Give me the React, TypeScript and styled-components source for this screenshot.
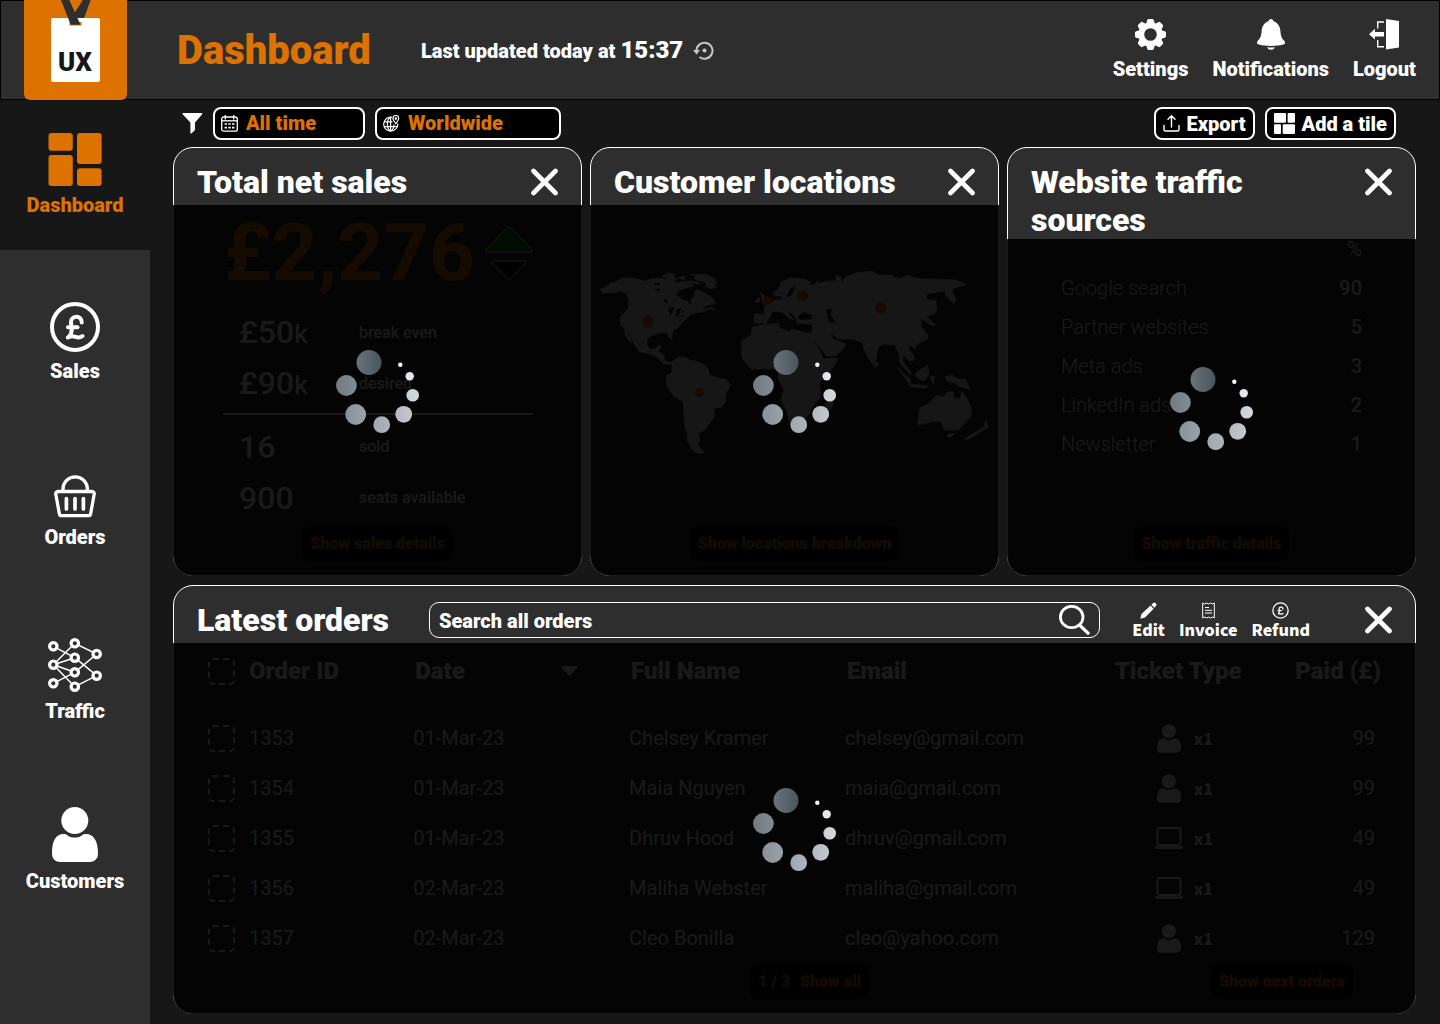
import React from "react";
import styled, { createGlobalStyle } from "styled-components";

const color = {
  page: "#171717",
  panel: "#2e2e2e",
  accent: "#de7200",
  white: "#ffffff",
  black: "#000000",
};

const heavy = 900;

const GlobalStyle = createGlobalStyle`
  *, *::before, *::after { box-sizing: border-box; }
  body {
    margin: 0;
    background: ${color.page};
    color: ${color.white};
    font-family: Roboto, "Liberation Sans", sans-serif;
  }
  button, input, select { font: inherit; color: inherit; }
  h1, h2, p, ul, dl, dd { margin: 0; padding: 0; }
  svg { display: block; flex: none; }
`;

/* ---------- layout ---------- */

const Page = styled.div`
  min-height: 100vh;
  display: flex;
  flex-direction: column;
`;

const Header = styled.header`
  display: flex;
  align-items: center;
  height: 100px;
  padding: 0 24px;
  background: ${color.panel};
  box-shadow: inset 0 0 0 1px ${color.black};
`;

const LogoLink = styled.a`
  display: block;
  width: 103px;
  height: 100px;
  margin-right: 50px;
  background: ${color.accent};
  border-radius: 0 0 6px 6px;
`;

const PageTitle = styled.h1`
  width: 244px;
  padding-top: 2px;
  font-size: 40px;
  line-height: 48px;
  font-weight: ${heavy};
  color: ${color.accent};
`;

const Updated = styled.p`
  display: flex;
  align-items: center;
  gap: 10px;
  font-size: 20px;
  line-height: 28px;
  font-weight: ${heavy};

  time {
    font-size: 24px;
  }
`;

const PlainButton = styled.button`
  display: flex;
  align-items: center;
  justify-content: center;
  padding: 0;
  border: 0;
  background: none;
  cursor: pointer;
`;

const HeaderActions = styled.div`
  display: flex;
  gap: 24px;
  margin-left: auto;
`;

const HeaderAction = styled(PlainButton)`
  flex-direction: column;
  gap: 7px;
  font-size: 20px;
  line-height: 24px;
  font-weight: ${heavy};
`;

const Columns = styled.div`
  flex: 1;
  display: flex;
`;

const Sidebar = styled.nav`
  flex: none;
  width: 150px;
  background: ${color.panel};

  ul {
    list-style: none;
  }
`;

const NavItem = styled.li<{ $active?: boolean }>`
  height: ${(p) => (p.$active ? 150 : 169)}px;
  margin-bottom: ${(p) => (p.$active ? 8 : 0)}px;
  background: ${(p) => (p.$active ? color.page : "transparent")};
  color: ${(p) => (p.$active ? color.accent : color.white)};
`;

const NavLink = styled.a`
  display: flex;
  flex-direction: column;
  align-items: center;
  justify-content: center;
  gap: 7px;
  height: 100%;
  color: inherit;
  font-size: 20px;
  line-height: 24px;
  font-weight: ${heavy};
  text-decoration: none;
`;

const Main = styled.main`
  flex: 1;
  min-width: 0;
  display: flex;
  flex-direction: column;
  padding: 7px 24px 10px 23px;
`;

const Toolbar = styled.div`
  display: flex;
  align-items: center;
  gap: 10px;
  padding: 0 20px 0 9px;
  margin-bottom: 7px;
`;

const Spacer = styled.div`
  flex: 1;
`;

const Filter = styled.label<{ $width: number }>`
  display: flex;
  align-items: center;
  gap: 8px;
  width: ${(p) => p.$width}px;
  height: 33px;
  padding: 0 6px;
  border: 2px solid ${color.white};
  border-radius: 8px;
  background: ${color.black};

  select {
    flex: 1;
    min-width: 0;
    padding: 0 0 2px;
    border: 0;
    appearance: none;
    background: none;
    color: ${color.accent};
    font-size: 20px;
    line-height: 24px;
    font-weight: ${heavy};
  }
`;

const ToolButton = styled(PlainButton)`
  gap: 7px;
  height: 33px;
  padding: 0 7px;
  border: 2px solid ${color.white};
  border-radius: 8px;
  background: ${color.black};
  font-size: 20px;
  line-height: 24px;
  font-weight: ${heavy};
`;

const Board = styled.div`
  flex: 1;
  display: grid;
  grid-template-rows: 1fr 1fr;
  gap: 9px;
`;

const Tiles = styled.div`
  display: grid;
  grid-template-columns: repeat(3, 1fr);
  gap: 8px;
`;

const Card = styled.section`
  display: flex;
  flex-direction: column;
  min-width: 0;
  border: 1px solid ${color.white};
  border-radius: 20px;
  background: ${color.panel};
`;

const CardHeader = styled.div`
  display: flex;
  align-items: flex-start;
  min-height: 57px;
  padding: 15px 23px 0 23px;
`;

const CardTitle = styled.h2`
  max-width: 290px;
  font-size: 32px;
  line-height: 38px;
  font-weight: ${heavy};
`;

const CloseButton = styled(PlainButton)`
  height: 38px;
  margin-left: auto;
`;

const CardBody = styled.div`
  position: relative;
  flex: 1;
  display: flex;
  flex-direction: column;
  padding-bottom: 14px;
`;

/* Dims a card's content while its data loads. */
const Veil = styled.div`
  position: absolute;
  inset: 0 -1px -1px;
  display: grid;
  place-items: center;
  border-radius: 0 0 20px 20px;
  background: rgba(0, 0, 0, 0.9);
`;

const DetailButton = styled(PlainButton)`
  align-self: center;
  gap: 10px;
  height: 35px;
  margin-top: auto;
  padding: 0 8px;
  border-radius: 8px;
  background: ${color.black};
  color: ${color.accent};
  font-size: 16px;
  line-height: 20px;
  font-weight: ${heavy};
`;

/* ---------- sales ---------- */

const Total = styled.div`
  display: flex;
  align-items: center;
  gap: 10px;
  padding: 0 48px 0 50px;
  height: 96px;
  color: ${color.accent};
  font-size: 80px;
  line-height: 96px;
  font-weight: 700;
`;

const Stats = styled.dl<{ $ruled?: boolean }>`
  display: grid;
  grid-template-columns: 120px 1fr;
  grid-auto-rows: 51px;
  align-items: center;
  margin: 0 48px 0 49px;
  padding: ${(p) => (p.$ruled ? "6px 16px 4px" : "6px 16px 0")};
  border-bottom: ${(p) => (p.$ruled ? `2px solid ${color.white}` : "0")};
`;

const StatValue = styled.dd`
  font-size: 32px;
  line-height: 38px;
  font-weight: 500;

  small {
    font-size: 26px;
  }
`;

const StatName = styled.dt`
  font-size: 16px;
  line-height: 20px;
  font-weight: 500;
`;

/* ---------- locations ---------- */

const MapFrame = styled.div`
  padding: 65px 8px 0 9px;

  svg {
    width: 100%;
    height: auto;
  }
`;

/* ---------- traffic ---------- */

const TrafficTable = styled.table`
  margin: 0 53px;
  border-collapse: collapse;
  font-size: 20px;
  line-height: 24px;

  th, td {
    height: 39px;
    padding: 0;
    text-align: left;
    font-weight: 300;
  }
  td {
    text-align: right;
    font-weight: 500;
  }
  thead th {
    height: 29px;
    line-height: 20px;
    text-align: right;
    vertical-align: top;
    font-weight: 400;
  }
`;

/* ---------- orders ---------- */

const SearchBox = styled.label`
  flex: 1;
  display: flex;
  align-items: center;
  gap: 8px;
  height: 36px;
  margin: 1px 32px 0 40px;
  padding: 0 9px;
  border: 1px solid ${color.white};
  border-radius: 10px;

  input {
    flex: 1;
    min-width: 0;
    padding: 2px 0 0;
    border: 0;
    outline: 0;
    background: none;
    font-size: 20px;
    line-height: 24px;
    font-weight: ${heavy};
  }
  input::placeholder {
    color: ${color.white};
    opacity: 1;
  }
`;

const RowActions = styled.div`
  display: flex;
  gap: 14px;
  margin: 1px 54px 0 0;
`;

const RowAction = styled(PlainButton)`
  flex-direction: column;
  font-family: "Noto Sans CJK JP", "Noto Sans", sans-serif;
  font-size: 16px;
  line-height: 20px;
  font-weight: 900;
`;

const OrdersTable = styled.table`
  margin: 0 34px;
  table-layout: fixed;
  border-collapse: collapse;
  font-size: 20px;
  line-height: 24px;

  th, td {
    padding: 0;
    text-align: left;
    white-space: nowrap;
  }
  th {
    height: 70px;
    padding-bottom: 14px;
    font-size: 24px;
    line-height: 28px;
    font-weight: ${heavy};
  }
  th:nth-child(3), th:nth-child(4), th:nth-child(5) {
    padding-left: 2px;
  }
  td {
    height: 50px;
  }
  th:last-child, td:last-child {
    text-align: right;
  }
  td:last-child {
    padding-right: 6px;
  }
`;

const Col = styled.col<{ $share: number }>`
  width: ${(p) => p.$share}%;
`;

const Tick = styled.input`
  display: block;
  appearance: none;
  width: 27px;
  height: 27px;
  margin: 0;
  border: 2px dashed ${color.white};
  border-radius: 5px;
`;

const SortButton = styled(PlainButton)`
  width: 163px;
  justify-content: space-between;
`;

const Ticket = styled.span`
  display: grid;
  grid-template-columns: 28px auto;
  align-items: center;
  justify-content: start;
  gap: 11px;
  padding-left: 40px;
  font-family: "Noto Sans CJK JP", "Noto Sans", sans-serif;
  font-weight: 900;
  font-size: 16px;

  svg {
    justify-self: center;
  }
`;

const OrdersFooter = styled.div`
  display: flex;
  justify-content: flex-end;
  gap: 342px;
  margin-top: auto;
  padding-right: 62px;
`;

/* ---------- icons ---------- */

const LogoArt = () => (
  <svg width="103" height="100" viewBox="0 0 103 100">
    <rect x="27" y="18" width="49" height="64" rx="2" fill="#fff" />
    <path d="M58.700 0H66.700L60 18H53.500L50.500 13Z" fill="#2e2e2e" />
    <path d="M45.500 22H57.500V25.500H45.500Z" fill={color.accent} />
    <path d="M37 0H45.300L56.500 24.700H46.700Z" fill="#2e2e2e" />
    <text
      x="51"
      y="71"
      textAnchor="middle"
      fontFamily="Roboto, sans-serif"
      fontWeight="900"
      fontSize="26"
      fill="#171717"
    >
      UX
    </text>
  </svg>
);

const RefreshIcon = () => (
  <svg width="21" height="19" viewBox="0 0 21 19" fill="none">
    <path d="M3.500 9.500A8 8 0 1 1 6.500 16" stroke="#c8c8c8" strokeWidth="2" />
    <path d="M0 9H7L3.500 13.500Z" fill="#c8c8c8" />
    <circle cx="11.500" cy="9.500" r="2" fill="#c8c8c8" />
  </svg>
);

const GearIcon = () => (
  <svg width="31" height="31" viewBox="-15.500 -15.500 31 31">
    <circle r="9.200" fill="none" stroke="#fff" strokeWidth="5.800" />
    {[0, 45, 90, 135, 180, 225, 270, 315].map((a) => (
      <path
        key={a}
        d="M-4.600 -10L-3.300 -14.200Q-3 -15.500 -1.800 -15.500H1.800Q3 -15.500 3.300 -14.200L4.600 -10Z"
        transform={`rotate(${a})`}
        fill="#fff"
      />
    ))}
  </svg>
);

const BellIcon = () => (
  <svg width="28" height="31" viewBox="0 0 28 31" fill="#fff">
    <path d="M14 0c1.200 0 2 .8 2.400 2C20.500 3.400 23 7 23.400 12c.4 5.500 1.600 7.600 3.600 9.600 1.600 1.700 1.200 3.400-.8 4C22.500 26.700 18.500 27 14 27S5.500 26.700 1.800 25.600C-.2 25-.6 23.300 1 21.600 3 19.600 4.200 17.500 4.600 12 5 7 7.500 3.400 11.600 2 12 .8 12.800 0 14 0Z" />
    <path d="M9.800 28.200q4.200.4 8.400 0Q16.500 30.800 14 30.800T9.800 28.200Z" />
  </svg>
);

const LogoutIcon = () => (
  <svg width="31" height="31" viewBox="0 0 31 31" fill="#fff">
    <path d="M17 0L30 2V28.500L17 30.500Z" />
    <path d="M0 15.200L6 9.800V13H15V17.600H6V20.600Z" />
    <path d="M15 3H8.700V9.500M8.700 21V27.700H15" fill="none" stroke="#fff" strokeWidth="1.400" />
  </svg>
);

const TilesIcon = () => (
  <svg width="54" height="53" viewBox="0 0 54 53" fill="currentColor">
    <rect x="0.500" width="24.300" height="17.700" rx="3" />
    <rect x="0.500" y="22" width="24.300" height="31" rx="3" />
    <rect x="29" width="24.600" height="31" rx="3" />
    <rect x="29" y="35.300" width="24.600" height="17.700" rx="3" />
  </svg>
);

const PoundShape = () => (
  <>
    <path d="M31.800 20.500C32 16.500 29 14.800 26.500 14.800 22.500 14.800 20.500 17.800 21 21.300 21.500 24.500 22.500 28 21 31.500 20.300 33.500 19 34.800 17.800 35.500 21 33.800 23.500 34 25.500 34.800 28.500 36 30.500 35.600 32.500 34" />
    <path d="M18 25.300H27.500" />
  </>
);

const SalesIcon = () => (
  <svg width="50" height="50" viewBox="0 0 50 50" fill="none" stroke="#fff" strokeWidth="4" strokeLinecap="round" strokeLinejoin="round">
    <circle cx="25" cy="25" r="23" />
    <PoundShape />
  </svg>
);

const BasketIcon = () => (
  <svg width="42" height="43" viewBox="0 0 42 43" fill="none" stroke="#fff" strokeWidth="3.300">
    <path d="M9 15.500V14a12.200 12.200 0 0 1 24.400 0V15.500" />
    <path d="M4 16.500H38A2.300 2.300 0 0 1 40.200 19.300L36.600 38.900A2 2 0 0 1 34.600 40.600H7.400A2 2 0 0 1 5.400 38.900L1.800 19.300A2.300 2.300 0 0 1 4 16.500Z" />
    <path d="M12.400 23.500V34M21 23.500V34M29.400 23.500V34" strokeWidth="3.700" strokeLinecap="round" />
  </svg>
);

const trafficNodes = [
  [5.3, 8.3],
  [5.3, 26.7],
  [5.3, 45.3],
  [26.8, 5.3],
  [26.8, 19.7],
  [26.8, 34.3],
  [26.8, 48.7],
  [48.7, 16],
  [48.7, 37.7],
];
const trafficEdges = [
  [0, 4],
  [1, 3],
  [1, 4],
  [1, 5],
  [1, 6],
  [2, 5],
  [3, 7],
  [4, 8],
  [5, 7],
  [6, 8],
];

const TrafficIcon = () => (
  <svg width="54" height="54" viewBox="0 0 54 54">
    {trafficEdges.map(([a, b]) => (
      <line
        key={`${a}-${b}`}
        x1={trafficNodes[a][0]}
        y1={trafficNodes[a][1]}
        x2={trafficNodes[b][0]}
        y2={trafficNodes[b][1]}
        stroke="#fff"
        strokeWidth="1.500"
      />
    ))}
    {trafficNodes.map(([x, y]) => (
      <circle key={`${x}-${y}`} cx={x} cy={y} r="3.700" fill={color.panel} stroke="#fff" strokeWidth="3.200" />
    ))}
  </svg>
);

const PersonIcon = ({ size = 55 }: { size?: number }) => (
  <svg width={Math.round((size * 46) / 55)} height={size} viewBox="0 0 46 55" fill="#fff">
    <circle cx="22.800" cy="13.500" r="13.500" />
    <path d="M11.500 27C13.300 27 14.300 27.500 15.700 28.400 19.900 31.300 25.500 31.300 29.700 28.400 31.100 27.500 32.100 27 33.900 27 41.500 27 46 33.500 46 46.500 46 52 42.500 55 37.500 55H8.500C3.500 55 0 52 0 46.500 0 33.500 4 27 11.500 27Z" />
  </svg>
);

const LaptopIcon = () => (
  <svg width="28" height="22" viewBox="0 0 28 22">
    <rect x="2.500" y="1" width="23" height="17" rx="1.500" fill="none" stroke="#fff" strokeWidth="1.800" />
    <path d="M0 19.200H28V20.500Q27.500 22 26 22H2Q.5 22 0 20.500Z" fill="#fff" />
  </svg>
);

const FunnelIcon = () => (
  <svg width="21" height="21" viewBox="0 0 21 21" fill="#fff">
    <path d="M1 0H19.800Q20.700.6 20 1.500L13 9.500V17L9.400 20.500Q8.400 20.800 8.400 20V9.500L.8 1.500Q.1.600 1 0Z" />
  </svg>
);

const CalendarIcon = () => (
  <svg width="17" height="17" viewBox="0 0 17 17" fill="none" stroke="#fff" strokeWidth="1.300">
    <rect x=".7" y="2" width="15.600" height="14.200" rx="2" />
    <path d="M.7 5.800H16.300" />
    <path d="M4.300 0V4M12.700 0V4" strokeLinecap="round" />
    <path d="M3.600 9H6M7.300 9H9.700M11 9H13.400M3.600 12.600H6M7.300 12.600H9.700M11 12.600H13.400" strokeWidth="1.600" />
  </svg>
);

const GlobeIcon = () => (
  <svg width="17" height="17" viewBox="0 0 17 17" fill="none" stroke="#fff" strokeWidth="1.200">
    <path d="M9 2.200A7 7 0 1 0 14.700 8.500" />
    <path d="M7.600 2.200C3.300 4.500 3.300 13.500 7.600 16M7.600 2.200V16M7.600 16C10 14.800 11 12.500 11 9.500M1.200 6.800H9.500M1.200 11.600H14" />
    <path d="M12.800 8.600C10.800 5.800 9.900 4.700 9.900 3.400a2.900 2.900 0 0 1 5.800 0C15.700 4.700 14.800 5.800 12.800 8.600Z" />
    <circle cx="12.800" cy="3.500" r=".7" />
  </svg>
);

const ExportIcon = () => (
  <svg width="17" height="17" viewBox="0 0 17 17" fill="none" stroke="#fff" strokeWidth="1.400" strokeLinecap="round" strokeLinejoin="round">
    <path d="M8.500 12V1M5 4.200L8.500.8 12 4.200M1 10.500V14.500Q1 16 2.500 16H14.500Q16 16 16 14.500V10.500" />
  </svg>
);

const AddTileIcon = () => (
  <svg width="21" height="21" viewBox="0 0 21 21" fill="#fff">
    <rect width="12" height="9.700" rx="1" />
    <rect x="13.600" width="7.400" height="9.700" rx="1" />
    <rect y="11.300" width="7" height="9.700" rx="1" />
    <rect x="8.700" y="11.300" width="12.300" height="9.700" rx="1" />
  </svg>
);

const CloseIcon = () => (
  <svg width="28" height="28" viewBox="0 0 28 28" stroke="#fff" strokeWidth="4.600" strokeLinecap="round">
    <path d="M3.500 3L25.500 25M25.500 3L3.500 25" />
  </svg>
);

const SearchIcon = () => (
  <svg width="31" height="30" viewBox="0 0 31 30" fill="none" stroke="#fff" strokeLinecap="round">
    <ellipse cx="12.700" cy="12" rx="11.300" ry="10.700" strokeWidth="2.800" />
    <path d="M21 20.500L29 28.200" strokeWidth="3.200" />
  </svg>
);

const PencilIcon = () => (
  <svg width="17" height="17" viewBox="0 0 17 17" fill="#fff">
    <path d="M.3 16.700L1.500 12 10.500 3.600 13.600 6.700 5 15.600Z" />
    <path d="M11.400 2.700L13.200.9Q14.200 0 15.200.9L16.100 1.800Q17 2.800 16.100 3.800L14.400 5.700Z" />
  </svg>
);

const ReceiptIcon = () => (
  <svg width="13" height="17" viewBox="0 0 13 17" fill="none" stroke="#fff" strokeWidth="1">
    <path d="M.7 1L2.500 2 4.500 1 6.500 2 8.500 1 10.500 2 12.300 1V16L10.500 15 8.500 16 6.500 15 4.500 16 2.500 15 .7 16Z" />
    <path d="M3 5.500H7M3 8.300H10M3 11H10" />
  </svg>
);

const RefundIcon = () => (
  <svg width="17" height="17" viewBox="0 0 50 50" fill="none" stroke="#fff" strokeWidth="3.800" strokeLinecap="round">
    <circle cx="25" cy="25" r="22.500" />
    <PoundShape />
  </svg>
);

const TrendIcon = () => (
  <svg width="48" height="54" viewBox="0 0 48 54" stroke="#fff" strokeLinejoin="round">
    <path d="M22.500 1.500Q24 .2 25.500 1.500L47 23.500Q48 26 45.500 26H2.500Q0 26 1 23.500Z" fill="#007a00" />
    <path d="M7.500 35H40.500Q42 35.500 41 37L25.500 52.500Q24 54 22.500 52.500L7 37Q6 35.500 7.500 35Z" fill="#000" />
  </svg>
);

const SortIcon = () => (
  <svg width="17" height="10" viewBox="0 0 17 10" fill="#fff">
    <path d="M1 0H16Q17.200.4 16.400 1.500L9.300 9.200Q8.500 10 7.700 9.200L.6 1.500Q-.2.400 1 0Z" />
  </svg>
);

const spinnerDots = [
  { x: 33, y: 12.5, r: 12.5, from: "#6a7378", to: "#48555d" },
  { x: 10.4, y: 35.5, r: 10.4, from: "#727b82", to: "#828a92" },
  { x: 19.7, y: 64.5, r: 10.4, from: "#8a9299", to: "#9aa2a9" },
  { x: 45.7, y: 74.7, r: 8.4, from: "#a0a7ae", to: "#aeb5bc" },
  { x: 67.7, y: 64.3, r: 8.4, from: "#b4bac1", to: "#c4c9cf" },
  { x: 76.7, y: 45.2, r: 6.3, from: "#cbd0d4", to: "#d5d9dd" },
  { x: 73.7, y: 26.2, r: 4.2, from: "#dfe3e8", to: "#e6e9ed" },
  { x: 64.3, y: 14.8, r: 2.2, from: "#f4f5f7", to: "#ffffff" },
];

const Spinner = ({ id }: { id: string }) => (
  <svg width="84" height="86" viewBox="0 -2 84 86" role="img" aria-label="Loading">
    <defs>
      {spinnerDots.map((d, i) => (
        <linearGradient key={i} id={`${id}-${i}`}>
          <stop offset="0" stopColor={d.from} />
          <stop offset="1" stopColor={d.to} />
        </linearGradient>
      ))}
    </defs>
    {spinnerDots.map((d, i) => (
      <circle key={i} cx={d.x} cy={d.y} r={d.r} fill={`url(#${id}-${i})`} />
    ))}
  </svg>
);

const land = [
  "M32 148L50 140 60 130 78 126 95 114H130L165 124 185 116 215 114 228 120 250 122 262 128 285 124 300 130 312 138 300 140 270 150 258 160 265 172 280 180 292 182 298 196 304 190 302 178 314 170 312 156 320 148 335 155 348 162 360 170 372 178 376 190 355 196 340 202 325 215 300 225 290 236 280 244 270 256 262 265 248 274 245 298 236 292 234 280 220 276 205 280 185 286 172 298 170 315 180 328 195 326 208 314 214 322 204 334 220 342 225 362 245 368 236 374 220 372 200 350 170 340 150 336 138 322 125 296 113 266 116 285 126 305 120 308 105 285 104 266 92 255 90 232 105 215 116 205V180L108 160 88 152 72 158H36Z",
  "M216 108L235 99 255 104 250 112 262 118 240 124Z",
  "M300 104L345 102 372 114 382 130 372 134 378 142 362 146 345 138 350 128 325 122 312 116 318 108Z",
  "M262 112L285 108 282 120ZM290 122L325 126 330 132 295 130Z",
  "M320 210L345 206 378 208 360 202 345 214 322 218Z",
  "M245 368L265 350 285 352 305 362 320 364 345 376 355 388 358 404 385 414 408 418 423 434 408 460 405 490 395 500 372 506 374 530 355 555 345 570 325 580 330 600 322 612 342 638 322 640 305 628 292 600V578L284 560 280 485 250 468 230 435V405L246 398Z",
  "M487 262L520 254 566 250 568 264 600 276 605 266 650 280 662 278 670 300 690 332 700 356 742 354 738 370 715 398 688 428 692 470 668 500 660 520 645 536 620 556 600 552 592 520 584 500 572 480 582 450 564 414 566 396 550 386 484 388 456 354 454 304 484 286Z",
  "M706 490L730 478 728 498 716 514 706 508Z",
  "M492 222H525L522 200 548 186 552 180H575L576 168 556 168 548 158 566 148 572 128 600 114 640 116 662 126 655 136 676 134 680 122 688 130 712 124 738 122V106L752 110 756 128 765 112 800 98 845 94 865 104 905 106 928 118 950 106 985 116 1098 120 1130 134 1100 142 1085 150 1098 180 1092 190 1068 168 1065 154 1040 156 1005 165 1012 178 1038 182 1040 210 1036 218 1010 232 1038 254 1030 258 992 236 994 262 1014 285 1012 298 985 310 975 325 955 315 958 330 974 350 970 362 955 362 940 342 938 364 965 400 958 402 930 370 928 344 915 315 880 312 864 322 860 350 850 374 838 360 820 322 818 308 790 298 745 296 720 276 728 296 768 312 755 332 735 348 710 348 665 290 668 254 622 250 618 236 600 215 596 222 612 240 600 236 580 220 566 214H548L540 230 528 250 492 248Z",
  "M512 160L522 166 530 180 542 188 520 194ZM494 186L508 172V186Z",
  "M975 400L1012 376 1018 402 1000 424 982 414ZM922 382L962 420 958 432ZM955 432L1015 438 1010 444 960 440ZM1020 410L1034 408 1030 432Z",
  "M1066 410L1085 404 1100 416 1125 418 1142 448 1110 440 1095 430 1072 424ZM852 368L862 366 866 376 856 382Z",
  "M990 504L1015 492 1040 466 1062 470 1075 454 1092 456 1090 472 1108 478 1116 454 1128 470 1145 505 1142 530 1105 570H1065L1052 546 1030 544 982 556Z",
  "M1075 582L1092 580 1086 590 1072 590ZM1122 598L1182 560 1186 544 1198 560 1165 580 1135 598Z",
];
const water = [
  "M588 172L600 148 618 134 612 150 604 168Z",
  "M622 232L640 216 668 226 664 238 630 240Z",
  "M708 208H726L722 224 736 246 718 248 712 226Z",
  "M234 204L256 200 252 208 240 226ZM260 208L272 206 270 222 258 232ZM274 210L284 214 278 218ZM264 232L284 222 280 230Z",
  "M192 130L210 128 208 136 194 136ZM194 148L210 146 208 152 196 152ZM220 180L230 176 234 188 226 190Z",
];
const pins = [
  [174, 245, 17],
  [328, 458, 13],
  [532, 182, 13],
  [638, 168, 17],
  [872, 203, 17],
];

const WorldMap = () => (
  <svg viewBox="30 90 1170 556" role="img" aria-label="Customer locations on a world map">
    <path d={land.join("")} fill="#dcdcdc" stroke="#dcdcdc" strokeWidth="2" strokeLinejoin="round" />
    <path d={water.join("")} fill={color.panel} />
    {pins.map(([x, y, r]) => (
      <circle key={x} cx={x} cy={y} r={r} fill={color.accent} />
    ))}
  </svg>
);

/* ---------- data ---------- */

const navItems = [
  { name: "Dashboard", icon: <TilesIcon />, active: true },
  { name: "Sales", icon: <SalesIcon /> },
  { name: "Orders", icon: <BasketIcon /> },
  { name: "Traffic", icon: <TrafficIcon /> },
  { name: "Customers", icon: <PersonIcon /> },
];

const traffic = [
  ["Google search", 90],
  ["Partner websites", 5],
  ["Meta ads", 3],
  ["LinkedIn ads", 2],
  ["Newsletter", 1],
];

const orders = [
  { id: 1353, date: "01-Mar-23", name: "Chelsey Kramer", email: "chelsey@gmail.com", online: false, paid: 99 },
  { id: 1354, date: "01-Mar-23", name: "Maia Nguyen", email: "maia@gmail.com", online: false, paid: 99 },
  { id: 1355, date: "01-Mar-23", name: "Dhruv Hood", email: "dhruv@gmail.com", online: true, paid: 49 },
  { id: 1356, date: "02-Mar-23", name: "Maliha Webster", email: "maliha@gmail.com", online: true, paid: 49 },
  { id: 1357, date: "02-Mar-23", name: "Cleo Bonilla", email: "cleo@yahoo.com", online: false, paid: 129 },
];

const Close = ({ of }: { of: string }) => (
  <CloseButton aria-label={`Close ${of}`}>
    <CloseIcon />
  </CloseButton>
);

export default function App() {
  return (
    <Page>
      <GlobalStyle />
      <Header>
        <LogoLink href="#" aria-label="Home">
          <LogoArt />
        </LogoLink>
        <PageTitle>Dashboard</PageTitle>
        <Updated>
          <span>
            Last updated today at <time>15:37</time>
          </span>
          <PlainButton aria-label="Refresh">
            <RefreshIcon />
          </PlainButton>
        </Updated>
        <HeaderActions>
          <HeaderAction>
            <GearIcon />
            Settings
          </HeaderAction>
          <HeaderAction>
            <BellIcon />
            Notifications
          </HeaderAction>
          <HeaderAction>
            <LogoutIcon />
            Logout
          </HeaderAction>
        </HeaderActions>
      </Header>

      <Columns>
        <Sidebar>
          <ul>
            {navItems.map((item) => (
              <NavItem key={item.name} $active={item.active}>
                <NavLink href="#">
                  {item.icon}
                  {item.name}
                </NavLink>
              </NavItem>
            ))}
          </ul>
        </Sidebar>

        <Main>
          <Toolbar>
            <FunnelIcon />
            <Filter $width={152}>
              <CalendarIcon />
              <select aria-label="Period">
                <option>All time</option>
              </select>
            </Filter>
            <Filter $width={186}>
              <GlobeIcon />
              <select aria-label="Region">
                <option>Worldwide</option>
              </select>
            </Filter>
            <Spacer />
            <ToolButton>
              <ExportIcon />
              Export
            </ToolButton>
            <ToolButton>
              <AddTileIcon />
              Add a tile
            </ToolButton>
          </Toolbar>

          <Board>
            <Tiles>
              <Card>
                <CardHeader>
                  <CardTitle>Total net sales</CardTitle>
                  <Close of="total net sales" />
                </CardHeader>
                <CardBody>
                  <Total>
                    £2,276
                    <TrendIcon />
                  </Total>
                  <Stats $ruled>
                    <StatValue>
                      £50<small>k</small>
                    </StatValue>
                    <StatName>break even</StatName>
                    <StatValue>
                      £90<small>k</small>
                    </StatValue>
                    <StatName>desired</StatName>
                  </Stats>
                  <Stats>
                    <StatValue>16</StatValue>
                    <StatName>sold</StatName>
                    <StatValue>900</StatValue>
                    <StatName>seats available</StatName>
                  </Stats>
                  <DetailButton>Show sales details</DetailButton>
                  <Veil>
                    <Spinner id="sales" />
                  </Veil>
                </CardBody>
              </Card>

              <Card>
                <CardHeader>
                  <CardTitle>Customer locations</CardTitle>
                  <Close of="customer locations" />
                </CardHeader>
                <CardBody>
                  <MapFrame>
                    <WorldMap />
                  </MapFrame>
                  <DetailButton>Show locations breakdown</DetailButton>
                  <Veil>
                    <Spinner id="locations" />
                  </Veil>
                </CardBody>
              </Card>

              <Card>
                <CardHeader>
                  <CardTitle>Website traffic sources</CardTitle>
                  <Close of="website traffic sources" />
                </CardHeader>
                <CardBody>
                  <TrafficTable>
                    <thead>
                      <tr>
                        <th colSpan={2}>%</th>
                      </tr>
                    </thead>
                    <tbody>
                      {traffic.map(([name, share]) => (
                        <tr key={name}>
                          <th scope="row">{name}</th>
                          <td>{share}</td>
                        </tr>
                      ))}
                    </tbody>
                  </TrafficTable>
                  <DetailButton>Show traffic details</DetailButton>
                  <Veil>
                    <Spinner id="traffic" />
                  </Veil>
                </CardBody>
              </Card>
            </Tiles>

            <Card>
              <CardHeader>
                <CardTitle>Latest orders</CardTitle>
                <SearchBox>
                  <input type="text" placeholder="Search all orders" aria-label="Search all orders" />
                  <SearchIcon />
                </SearchBox>
                <RowActions>
                  <RowAction>
                    <PencilIcon />
                    Edit
                  </RowAction>
                  <RowAction>
                    <ReceiptIcon />
                    Invoice
                  </RowAction>
                  <RowAction>
                    <RefundIcon />
                    Refund
                  </RowAction>
                </RowActions>
                <Close of="latest orders" />
              </CardHeader>
              <CardBody>
                <OrdersTable>
                  <colgroup>
                    <Col $share={3.5} />
                    <Col $share={14} />
                    <Col $share={18.4} />
                    <Col $share={18.4} />
                    <Col $share={23} />
                    <Col $share={12} />
                    <Col $share={10.7} />
                  </colgroup>
                  <thead>
                    <tr>
                      <th>
                        <Tick type="checkbox" aria-label="Select all orders" />
                      </th>
                      <th>Order ID</th>
                      <th>
                        <SortButton>
                          Date
                          <SortIcon />
                        </SortButton>
                      </th>
                      <th>Full Name</th>
                      <th>Email</th>
                      <th>Ticket Type</th>
                      <th>Paid (£)</th>
                    </tr>
                  </thead>
                  <tbody>
                    {orders.map((o) => (
                      <tr key={o.id}>
                        <td>
                          <Tick type="checkbox" aria-label={`Select order ${o.id}`} />
                        </td>
                        <td>{o.id}</td>
                        <td>{o.date}</td>
                        <td>{o.name}</td>
                        <td>{o.email}</td>
                        <td>
                          <Ticket>
                            {o.online ? <LaptopIcon /> : <PersonIcon size={29} />}
                            x1
                          </Ticket>
                        </td>
                        <td>{o.paid}</td>
                      </tr>
                    ))}
                  </tbody>
                </OrdersTable>
                <OrdersFooter>
                  <DetailButton>
                    <span>1 / 3</span>
                    <span>Show all</span>
                  </DetailButton>
                  <DetailButton>Show next orders</DetailButton>
                </OrdersFooter>
                <Veil>
                  <Spinner id="orders" />
                </Veil>
              </CardBody>
            </Card>
          </Board>
        </Main>
      </Columns>
    </Page>
  );
}
